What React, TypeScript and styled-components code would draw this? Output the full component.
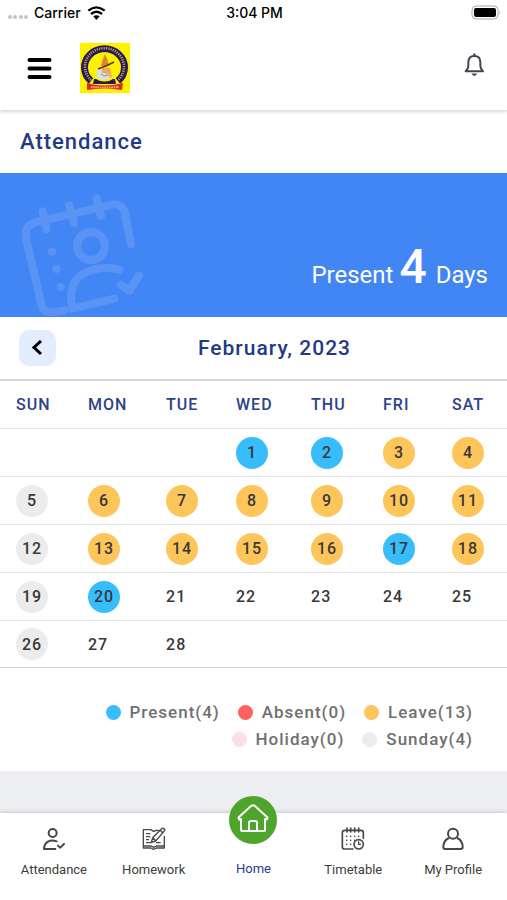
import React from "react";
import styled, { createGlobalStyle } from "styled-components";

const GlobalStyle = createGlobalStyle`
  *, *::before, *::after { box-sizing: border-box; }
  body {
    margin: 0;
    background: #eceef2;
    color: #333;
    font-family: Roboto, "Liberation Sans", sans-serif;
  }
  button { font: inherit; border: 0; padding: 0; background: none; cursor: pointer; }
  svg { display: block; flex: none; }
`;

const Page = styled.div`
  display: flex;
  flex-direction: column;
  min-height: 100vh;
`;

const StatusBar = styled.div`
  display: grid;
  grid-template-columns: 1fr auto 1fr;
  align-items: center;
  height: 26px;
  padding: 0 6px 0 8px;
  background: #fff;
  color: #000;
  font: 500 14px/26px Inter, sans-serif;
`;

const Carrier = styled.div`
  display: flex;
  align-items: center;
  gap: 6px;
`;

const BatterySlot = styled.div`
  display: flex;
  justify-content: flex-end;
`;

const Header = styled.header`
  display: flex;
  align-items: center;
  height: 84px;
  padding: 0 23px 0 27px;
  background: #fff;
  box-shadow: 0 2px 3px rgba(0, 0, 0, 0.16);
  clip-path: inset(0 0 -6px 0);
  z-index: 1;
`;

const LogoLink = styled.a`
  margin-left: 28px;
`;

const BellButton = styled.button`
  margin-left: auto;
  padding-bottom: 7px;
`;

const TitleBar = styled.div`
  padding: 17px 20px 16px;
  background: #fff;
`;

const Title = styled.h1`
  margin: 0;
  color: #1f3a86;
  font-size: 22px;
  font-weight: 500;
  line-height: 30px;
  letter-spacing: 1px;
`;

const Banner = styled.section`
  display: flex;
  justify-content: space-between;
  align-items: flex-end;
  background: #4285f4;
  color: #fff;
`;

const Summary = styled.p`
  margin: 0;
  padding: 0 19px 15px 0;
  font-size: 24px;
  line-height: 54px;
`;

const Count = styled.strong`
  margin-right: 3px;
  font-size: 48px;
  font-weight: 500;
`;

const MonthBar = styled.div`
  display: grid;
  grid-template-columns: 37px 1fr;
  align-items: center;
  padding: 13px 14px 13px 19px;
  background: #fff;
`;

const PrevButton = styled.button`
  display: grid;
  place-items: center;
  height: 36px;
  border-radius: 10px;
  background: #e2edfe;
`;

const Month = styled.h2`
  margin: 0;
  color: #1f3a86;
  font-size: 21px;
  font-weight: 500;
  line-height: 30px;
  letter-spacing: 1px;
  text-align: center;
`;

const Calendar = styled.table`
  width: 100%;
  table-layout: fixed;
  border-collapse: separate;
  border-spacing: 0;
  border-top: 2px solid #d5d7da;
  background: #fff;
`;

const Col = styled.col<{ $share: number }>`
  width: ${(p) => p.$share}%;
`;

const DayName = styled.th`
  height: 48px;
  padding: 0 0 0 16px;
  border-bottom: 1px solid #e6e7e9;
  color: #2c4488;
  font-size: 16px;
  font-weight: 500;
  letter-spacing: 1px;
  text-align: left;
`;

const DayCell = styled.td`
  height: 48px;
  padding: 0 0 0 16px;
  border-bottom: 1px solid #e6e7e9;
  tr:last-child > & {
    height: 47px;
    border-bottom-color: #d0d2d4;
  }
`;

const palette = {
  present: "#38bdfc",
  absent: "#fd625e",
  leave: "#fdc55a",
  holiday: "#fde0e6",
  sunday: "#ececec",
};

type Status = keyof typeof palette;

const Day = styled.span<{ $status?: Status }>`
  display: flex;
  align-items: center;
  justify-content: ${(p) => (p.$status ? "center" : "flex-start")};
  width: 32px;
  height: 32px;
  border-radius: 50%;
  background: ${(p) => (p.$status ? palette[p.$status] : "transparent")};
  color: #383838;
  font-size: 16px;
  font-weight: 500;
  letter-spacing: 1px;
`;

const Legend = styled.ul`
  display: flex;
  flex-wrap: wrap;
  justify-content: flex-end;
  column-gap: 18px;
  margin: 0;
  padding: 31px 34px 18px 80px;
  list-style: none;
  background: #fff;
`;

const LegendItem = styled.li`
  display: flex;
  align-items: center;
  gap: 9px;
  color: #707070;
  font-size: 17px;
  font-weight: 500;
  line-height: 27px;
  letter-spacing: 1px;
`;

const Dot = styled.span<{ $status: Status }>`
  width: 15px;
  height: 15px;
  border-radius: 50%;
  background: ${(p) => palette[p.$status]};
`;

const Nav = styled.nav`
  display: grid;
  grid-template-columns: repeat(5, 1fr);
  height: 87px;
  margin-top: auto;
  padding: 0 4px;
  background: #fff;
  box-shadow: 0 -1px 4px rgba(0, 0, 0, 0.16);
`;

const NavLink = styled.a<{ $active?: boolean }>`
  display: flex;
  flex-direction: column;
  align-items: center;
  gap: ${(p) => (p.$active ? 16 : 10)}px;
  margin-top: ${(p) => (p.$active ? -17 : 14)}px;
  color: ${(p) => (p.$active ? "#233d92" : "#3c3c3c")};
  font-size: 13px;
  line-height: 18px;
  text-decoration: none;
`;

const Wifi = () => (
  <svg width="20" height="16" viewBox="264 14 60 48" fill="none" stroke="#000" strokeWidth="7" aria-hidden>
    <path d="M268 31Q292 11 317 31" />
    <path d="M276 41Q292 27 309 41" />
    <path d="M283 48Q292 41 302 48L292 59Z" fill="#000" stroke="none" />
  </svg>
);

const Signal = () => (
  <svg width="20" height="14" viewBox="0 0 20 14" fill="#c4c4c4" aria-hidden>
    {[2, 7, 13, 18].map((x) => (
      <circle key={x} cx={x} cy="11" r="2" />
    ))}
  </svg>
);

const Battery = () => (
  <svg width="30" height="16" viewBox="0 0 30 16" aria-hidden>
    <rect x="1" y="1" width="26" height="13" rx="4" fill="#fff" stroke="#a8a8a8" />
    <rect x="3" y="3" width="22" height="9" rx="2" fill="#000" />
    <path d="M28.500 5.500v4q1.500-2 0-4" fill="#a8a8a8" />
  </svg>
);

const MenuIcon = () => (
  <svg width="25" height="24" viewBox="0 0 25 24" stroke="#000" strokeWidth="4" strokeLinecap="round" aria-hidden>
    <path d="M2.500 4h20M2.500 12.500h20M2.500 21h20" />
  </svg>
);

const Logo = () => (
  <svg width="50" height="50" viewBox="0 0 50 50" fill="none" role="img" aria-label="School crest">
    <path fill="#fff200" d="M0 0h50v50H0z" />
    <path d="M11 38A20 18.500 0 1 1 38 38" stroke="#2b1a55" strokeWidth="7" />
    <path d="M11 37A19.500 18.500 0 1 1 38 37" stroke="#a8976f" strokeWidth="2.500" strokeDasharray="1.300 1" />
    <path d="M14 36h21l1 5H13z" fill="#2b1a55" />
    <ellipse cx="24.500" cy="24" rx="15" ry="14.500" fill="#fff200" />
    <path d="M21 23q2-8 4-12 3 6 4 12z" fill="#e0822c" />
    <path d="M23 25h7l2 9-7 2-5-5z" fill="#f0a55a" />
    <path d="M17 26q6 0 5 4l7 1q2 3-1 5-8 2-11-2-1-4 0-8" fill="#d9dde6" />
    <path d="m18 26 8-3 8-4" stroke="#5a3228" strokeWidth="1.500" />
    <path d="m21 31 3 2 5-1" stroke="#8291a8" />
    <path d="M7 40q17 5 36 0l-1 7q-17-3-35 0z" fill="#dc2b20" />
    <path d="M11 44q13 1 28 0" stroke="#ffb09c" strokeWidth="2" strokeDasharray="1.500 .8" />
  </svg>
);

const Bell = () => (
  <svg width="20" height="24" viewBox="632 157 60 72" fill="none" stroke="#454350" strokeWidth="6" strokeLinejoin="round" aria-hidden>
    <path d="M637 212q8-7 8-17v-10q0-19 18-19t18 19v10q0 10 8 17z" />
    <path d="M663 166v-5" strokeLinecap="round" />
    <path d="M655 219q8 12 16 0z" fill="#454350" strokeWidth="1" />
  </svg>
);

const BannerArt = () => (
  <svg width="144" height="144" viewBox="0 189 432 432" fill="none" stroke="#fff" strokeWidth="24" strokeLinecap="round" opacity=".12" aria-hidden>
    <path d="M193 601 158 607Q131 610 124 585L79 388Q69 350 106 337L339 283Q366 280 374 306L393 403" />
    <path d="m128 304 12 54M208 286l14 52M290 266l13 52" />
    <circle cx="273" cy="408" r="42" />
    <path d="M359 480Q305 465 253 489 201 515 217 596L343 566" strokeLinejoin="round" />
    <path d="m363 524 26 18 28-46" strokeLinejoin="round" />
    <g fill="#fff" stroke="none">
      <circle cx="156" cy="425" r="12" />
      <circle cx="169" cy="477" r="12" />
      <circle cx="182" cy="531" r="12" />
    </g>
  </svg>
);

const Chevron = () => (
  <svg width="12" height="16" viewBox="0 0 12 16" fill="none" stroke="#000" strokeWidth="3" aria-hidden>
    <path d="M9 1 2 7.500 9 14" />
  </svg>
);

const AttendanceIcon = () => (
  <svg width="24" height="24" viewBox="127 141 72 72" fill="none" stroke="#484848" strokeWidth="6" strokeLinecap="round" strokeLinejoin="round" aria-hidden>
    <circle cx="159" cy="159" r="12" />
    <path d="M171 184q-11-4-20-2-17 4-18 25h34M175 197l7 6 11-11" />
  </svg>
);

const HomeworkIcon = () => (
  <svg width="24" height="24" viewBox="426 141 72 72" fill="none" stroke="#484848" strokeWidth="4" strokeLinejoin="round" aria-hidden>
    <path d="M478 151h-8l-9 3-9-5h-22v55h23l8 4 8-4h24v-36M430 198h24l7 4 8-4h24" />
    <path d="M438 161h13M438 170h13M438 179h9M438 188h17M468 188h14" />
    <path d="m454 187 4-14 27-27q4-3 8 1 3 3-1 7l-25 29zM480 150l8 8M458 173l9 9" />
  </svg>
);

const HomeIcon = () => (
  <svg width="48" height="48" viewBox="0 0 48 48" fill="none" stroke="#fff" strokeWidth="2" strokeLinejoin="round" strokeLinecap="round" aria-hidden>
    <circle cx="24" cy="24" r="24" fill="#4fa42c" stroke="none" />
    <path d="M12 23v11q0 1 1 1h22q1 0 1-1V23l2 .5.5-2L26 10q-2-1.500-4 0L9.500 21.500l.5 2z" stroke="none" />
    <path d="M12 23v11q0 1 1 1h22q1 0 1-1V23M12 23l-2 .500-.500-2L22 10q2-1.500 4 0l12.500 11.500-.5 2-2-.5" />
    <path d="M20 35v-8q0-2 2-2h4q2 0 2 2v8" />
  </svg>
);

const TimetableIcon = () => (
  <svg width="24" height="24" viewBox="267 142 72 72" fill="none" stroke="#484848" strokeWidth="5" strokeLinecap="round" aria-hidden>
    <path d="M303 208h-26q-6 0-6-6v-43q0-7 7-7h49q7 0 7 7v17M285 145v12M296 145v12M308 145v12M320 145v12" />
    <path d="M284 170h0M296 170h0M308 170h0M320 170h0M284 182h0M296 182h0M308 182h0M284 194h0M296 194h0" />
    <circle cx="320" cy="194" r="14" />
    <path d="M320 186v8h6" strokeWidth="4" />
  </svg>
);

const ProfileIcon = () => (
  <svg width="24" height="24" viewBox="566 141 72 72" fill="none" stroke="#484848" strokeWidth="6" strokeLinejoin="round" aria-hidden>
    <circle cx="602" cy="161" r="15" />
    <path d="M590 174q-17 7-17 28 0 5 5 5h47q6 0 6-5 0-21-17-28" />
  </svg>
);

const columns = [
  { name: "SUN", share: 14.2 },
  { name: "MON", share: 15.4 },
  { name: "TUE", share: 13.8 },
  { name: "WED", share: 14.8 },
  { name: "THU", share: 14.2 },
  { name: "FRI", share: 13.6 },
  { name: "SAT", share: 14 },
];

const FIRST_WEEKDAY = 3;
const DAYS_IN_MONTH = 28;
const presentDays = [1, 2, 17, 20];

const statusOf = (day: number): Status | undefined => {
  if (presentDays.includes(day)) return "present";
  if ((day + FIRST_WEEKDAY - 1) % 7 === 0) return "sunday";
  return day < 20 ? "leave" : undefined;
};

const weeks = Array.from({ length: 5 }, (_, week) =>
  Array.from({ length: 7 }, (_, weekday) => {
    const day = week * 7 + weekday - FIRST_WEEKDAY + 1;
    return day >= 1 && day <= DAYS_IN_MONTH ? day : null;
  })
);

const legend: { status: Status; text: string }[] = [
  { status: "present", text: "Present(4)" },
  { status: "absent", text: "Absent(0)" },
  { status: "leave", text: "Leave(13)" },
  { status: "holiday", text: "Holiday(0)" },
  { status: "sunday", text: "Sunday(4)" },
];

const links = [
  { text: "Attendance", Icon: AttendanceIcon },
  { text: "Homework", Icon: HomeworkIcon },
  { text: "Home", Icon: HomeIcon, active: true },
  { text: "Timetable", Icon: TimetableIcon },
  { text: "My Profile", Icon: ProfileIcon },
];

export default function App() {
  return (
    <Page>
      <GlobalStyle />
      <StatusBar>
        <Carrier>
          <Signal />
          Carrier
          <Wifi />
        </Carrier>
        <span>3:04 PM</span>
        <BatterySlot>
          <Battery />
        </BatterySlot>
      </StatusBar>
      <Header>
        <button aria-label="Menu">
          <MenuIcon />
        </button>
        <LogoLink href="#home">
          <Logo />
        </LogoLink>
        <BellButton aria-label="Notifications">
          <Bell />
        </BellButton>
      </Header>
      <main>
        <TitleBar>
          <Title>Attendance</Title>
        </TitleBar>
        <Banner>
          <BannerArt />
          <Summary>
            Present <Count>4</Count> Days
          </Summary>
        </Banner>
        <MonthBar>
          <PrevButton aria-label="Previous month">
            <Chevron />
          </PrevButton>
          <Month>February, 2023</Month>
        </MonthBar>
        <Calendar>
          <colgroup>
            {columns.map((c) => (
              <Col key={c.name} $share={c.share} />
            ))}
          </colgroup>
          <thead>
            <tr>
              {columns.map((c) => (
                <DayName key={c.name} scope="col">
                  {c.name}
                </DayName>
              ))}
            </tr>
          </thead>
          <tbody>
            {weeks.map((week, i) => (
              <tr key={i}>
                {week.map((day, j) => (
                  <DayCell key={j}>{day && <Day $status={statusOf(day)}>{day}</Day>}</DayCell>
                ))}
              </tr>
            ))}
          </tbody>
        </Calendar>
        <Legend>
          {legend.map(({ status, text }) => (
            <LegendItem key={status}>
              <Dot $status={status} />
              {text}
            </LegendItem>
          ))}
        </Legend>
      </main>
      <Nav>
        {links.map(({ text, Icon, active }) => (
          <NavLink key={text} href={"#" + text.toLowerCase().replace(" ", "-")} $active={active}>
            <Icon />
            {text}
          </NavLink>
        ))}
      </Nav>
    </Page>
  );
}
